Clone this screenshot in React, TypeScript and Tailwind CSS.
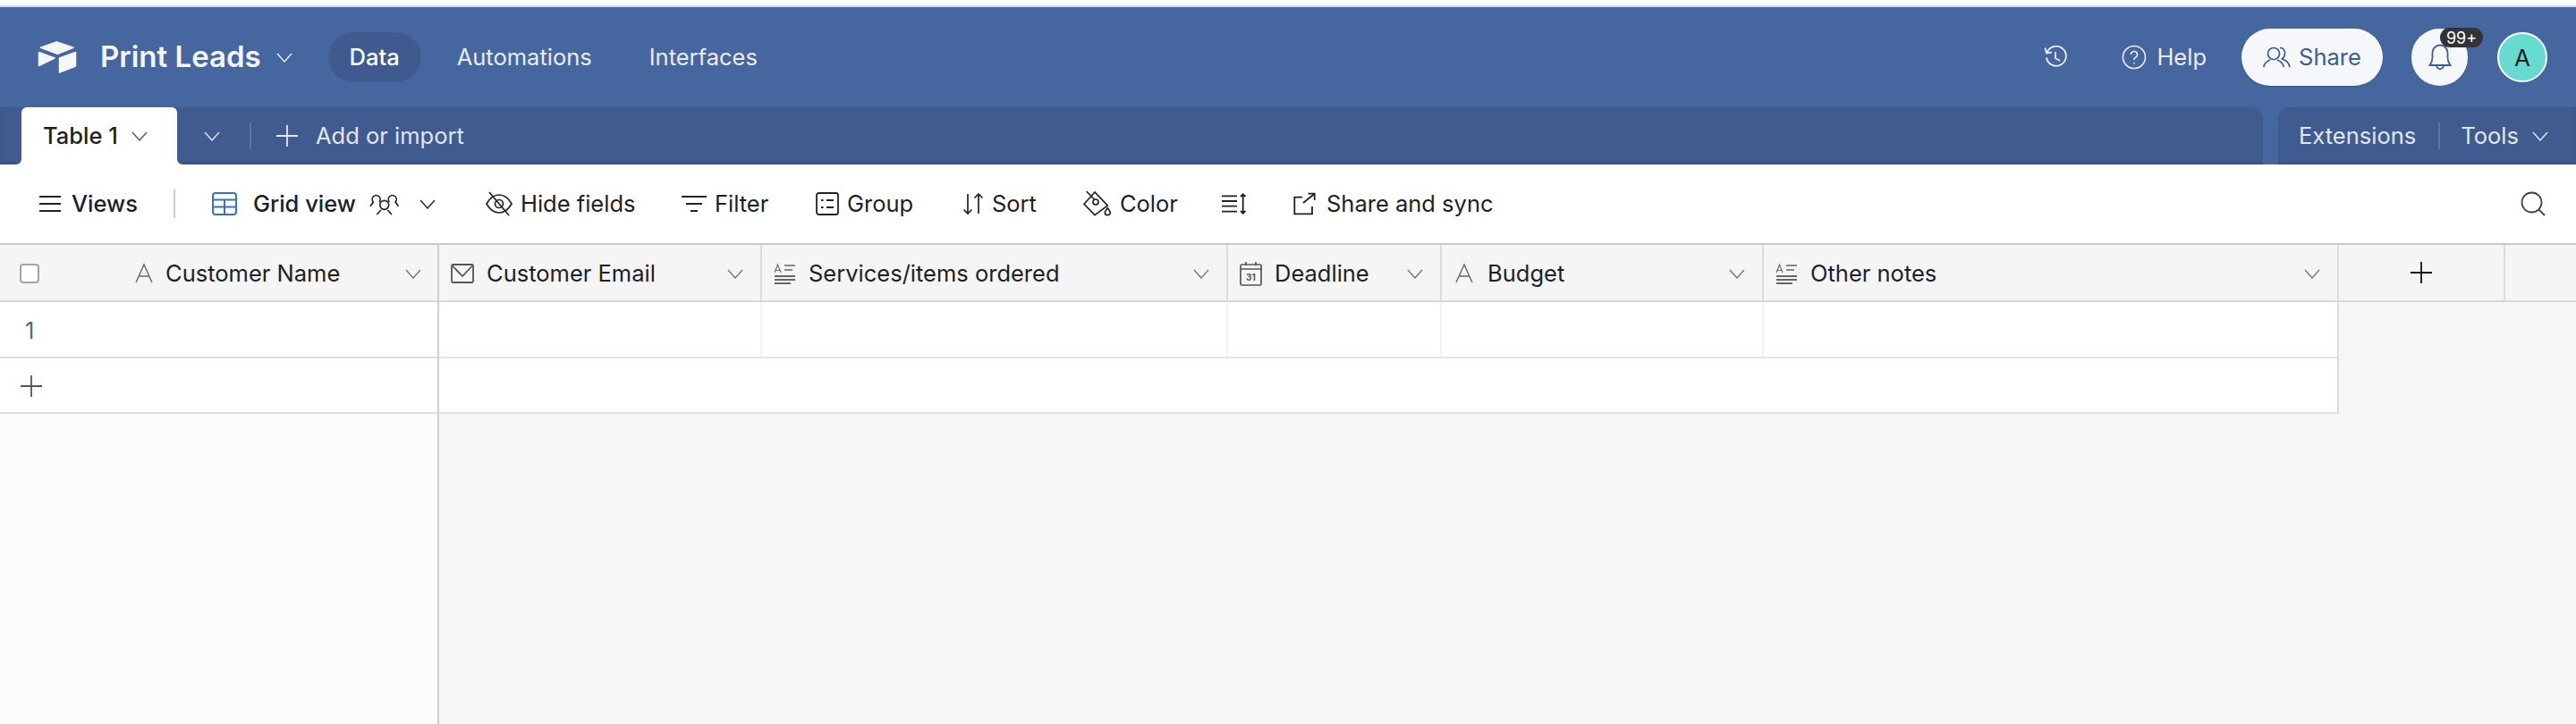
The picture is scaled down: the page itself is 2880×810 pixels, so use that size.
import { ReactNode } from "react";

type IconProps = { className?: string };

const Chevron = ({ className = "" }: IconProps) => (
  <svg viewBox="0 0 18 11" className={`h-[11px] w-[18px] shrink-0 ${className}`} fill="none" stroke="currentColor" strokeWidth="1.4">
    <path d="M1 1l8 9 8-9" />
  </svg>
);

const Plus = ({ className = "" }: IconProps) => (
  <svg viewBox="0 0 26 26" className={`h-[26px] w-[26px] shrink-0 ${className}`} fill="none" stroke="currentColor" strokeWidth="1.8">
    <path d="M13 1v24M1 13h24" />
  </svg>
);

const Logo = () => (
  <svg viewBox="0 0 44 36" className="h-9 w-11 shrink-0" fill="#f5f7fb" stroke="#f5f7fb" strokeWidth="1.5" strokeLinejoin="round">
    <path d="M3.500 7.300L21.300 1l18.700 6.300L22.300 14.300z" />
    <path d="M24.500 19L42.500 12.500v15.500L24.500 35z" />
    <path d="M1.500 12.500L19 19 1.500 27.500z" />
  </svg>
);

const FieldText = () => (
  <svg viewBox="0 0 22 24" className="mx-px h-6 w-[22px] shrink-0" fill="none" stroke="#666" strokeWidth="1.4">
    <path d="M2 22L11 2l9 20M5.5 15h11" />
  </svg>
);

const FieldEmail = () => (
  <svg viewBox="0 0 26 24" className="h-6 w-[26px] shrink-0" fill="none" stroke="#555" strokeWidth="1.8">
    <rect x="1" y="2" width="24" height="20" rx="1.5" />
    <path d="M1.5 3L13 15 24.500 3" />
  </svg>
);

const FieldLong = () => (
  <svg viewBox="0 0 25 24" className="h-6 w-[25px] shrink-0" fill="none" stroke="#666">
    <path d="M1 11l3.500-9 3.500 9M2.200 8.500h4.600" strokeWidth="1.1" />
    <path d="M12 3h12M12 8h9" strokeWidth="1.6" />
    <path d="M1 15h23M1 19h23M1 23h18" strokeWidth="1.8" />
  </svg>
);

const FieldDate = () => (
  <svg viewBox="0 0 25 28" className="h-[28px] w-[25px] shrink-0" fill="none" stroke="#555" strokeWidth="1.700">
    <rect x="1" y="4" width="23" height="23" rx="1.500" />
    <path d="M1 9h23M7 1v4M18 1v4" />
    <text x="12.500" y="22" textAnchor="middle" fontSize="10" fontWeight="700" fill="#555" stroke="none" fontFamily="Inter, sans-serif">31</text>
  </svg>
);

const tools: { label: string; icon: ReactNode; className: string }[] = [
  {
    label: "Hide fields",
    className: "w-[219px]",
    icon: (
      <svg viewBox="0 0 30 32" className="h-8 w-[30px]" fill="none" stroke="#222" strokeWidth="1.700">
        <path d="M1 16C5 9 10 6 15 6s10 3 14 10c-4 7-9 10-14 10S5 23 1 16z" />
        <circle cx="15" cy="16" r="4.500" />
        <path d="M4 3l22 26" />
      </svg>
    ),
  },
  {
    label: "Filter",
    className: "w-[150px]",
    icon: (
      <svg viewBox="0 0 28 20" className="h-5 w-7" fill="none" stroke="#222" strokeWidth="2">
        <path d="M0 2h28M5 10h18M10 18h8" />
      </svg>
    ),
  },
  {
    label: "Group",
    className: "w-[164px]",
    icon: (
      <svg viewBox="0 0 26 26" className="h-[26px] w-[26px]" fill="none" stroke="#222" strokeWidth="1.800">
        <rect x="1" y="1" width="24" height="24" rx="2.500" />
        <path d="M6 9h2.500M12 9h8M6 17h2.500M12 17h8" />
      </svg>
    ),
  },
  {
    label: "Sort",
    className: "w-[135px]",
    icon: (
      <svg viewBox="0 0 24 24" className="h-6 w-6" fill="none" stroke="#222" strokeWidth="1.700">
        <path d="M6 1v22M1.500 18.500L6 23l4.500-4.500M18 23V1M13.500 5.500L18 1l4.500 4.500" />
      </svg>
    ),
  },
  {
    label: "Color",
    className: "w-[154px]",
    icon: (
      <svg viewBox="0 0 32 36" className="h-9 w-8" fill="none" stroke="#222" strokeWidth="1.700">
        <path d="M1 18.300L13 5l14.300 15L13 30.700z" />
        <circle cx="14" cy="16" r="3" />
        <path d="M3.700 4l9 9.500M27.300 22.700c-2 2.500-3 3.700-3 5a3 3 0 006 0c0-1.300-1-2.500-3-5z" />
      </svg>
    ),
  },
];

const columns = [
  { label: "Customer Email", icon: <FieldEmail />, width: "w-[361px]" },
  { label: "Services/items ordered", icon: <FieldLong />, width: "w-[521px]" },
  { label: "Deadline", icon: <FieldDate />, width: "w-[239px]" },
  { label: "Budget", icon: <FieldText />, width: "w-[360px]" },
  { label: "Other notes", icon: <FieldLong />, width: "w-[643px]" },
];

export default function App() {
  return (
    <div className="flex h-[810px] w-[2880px] flex-col overflow-hidden bg-white font-['Inter',sans-serif] text-[25.5px] text-[#1d1f25]">
      <div className="h-[6px] bg-white" />
      <div className="h-[2px] bg-[#d8dbe3]" />

      {/* top app bar */}
      <header className="flex h-[112px] items-center bg-[#46669f] pl-[42px] pr-[32px] text-[#e9edf6]">
        <Logo />
        <span className="ml-[26px] text-[33px] font-semibold text-[#f4f6fb]">Print Leads</span>
        <Chevron className="ml-[17px]" />
        <div className="ml-[40px] flex h-[56px] w-[104px] items-center justify-center rounded-full border border-[#42608f] bg-[#3e5a8e] font-medium text-white">
          Data
        </div>
        <span className="ml-[40px]">Automations</span>
        <span className="ml-[64px]">Interfaces</span>

        <svg viewBox="0 0 26 26" className="ml-auto h-[26px] w-[26px]" fill="none" stroke="#e9edf6" strokeWidth="1.800">
          <path d="M3 13.500A11 11 0 103.500 8M1.500 2.500L3 8.500l6-1M13 7v7l5 3" />
        </svg>
        <svg viewBox="0 0 28 28" className="ml-[61px] h-7 w-7" fill="none" stroke="#e9edf6" strokeWidth="1.600">
          <circle cx="14" cy="14" r="12.500" />
          <path d="M10.500 11a3.500 3.500 0 115 3.200c-1 .6-1.500 1.200-1.500 2.800" />
          <path d="M14 20v1.500" />
        </svg>
        <span className="ml-[11px]">Help</span>
        <button className="ml-[39px] flex h-[64px] w-[158px] items-center justify-center gap-[9px] rounded-full bg-[#f5f7fb] text-[#3f5c92] shadow-sm">
          <svg viewBox="0 0 31 24" className="h-6 w-[31px]" fill="none" stroke="#3f5c92" strokeWidth="1.700">
            <circle cx="12" cy="8" r="6.500" />
            <path d="M1 23c0-5 5-7 7-8M23 23c0-5-5-7-7-8M19 1.500c6 0 7.500 8 2.500 12.500 3 1 7.500 3.500 8.500 9" />
          </svg>
          Share
        </button>
        <div className="relative ml-[32px] flex h-[64px] w-[63px] items-center justify-center rounded-full bg-[#f5f7fb]">
          <svg viewBox="0 0 26 36" className="h-9 w-[26px]" fill="none" stroke="#3f5c92" strokeWidth="1.800">
            <path d="M1.500 27c2-3 3-4 3-9v-5a8.500 8.500 0 0117 0v5c0 5 1 6 3 9z" />
            <path d="M9 27a4 4 0 008 0" />
          </svg>
          <span className="absolute -top-px left-[32px] flex h-[22px] w-[48px] items-center justify-center rounded-full bg-[#333] text-[18px] text-white">99+</span>
        </div>
        <div className="ml-[33px] flex h-[56px] w-[56px] items-center justify-center rounded-full border-2 border-white bg-[#68dbd1] text-[26px] text-[#1d1f25]">
          A
        </div>
      </header>

      {/* table tabs */}
      <div className="flex h-[64px] bg-[#46669f]">
        <div className="flex w-[2530px] items-center rounded-tr-[14px] bg-[#3f5b8f] text-[#e2e7f2] shadow-[inset_0_-2px_2px_rgba(0,0,0,0.15)]">
          <div className="relative ml-[24px] flex h-full w-[174px] items-center rounded-t-[6px] bg-white pl-[24px] text-[#1d1f25]">
            <span className="font-medium">Table 1</span>
            <Chevron className="ml-[15px] text-[#555]" />
            <span className="absolute bottom-0 -left-[6px] h-[6px] w-[6px] bg-white">
              <span className="block h-full w-full rounded-br-[6px] bg-[#3f5b8f]" />
            </span>
            <span className="absolute bottom-0 -right-[6px] h-[6px] w-[6px] bg-white">
              <span className="block h-full w-full rounded-bl-[6px] bg-[#3f5b8f]" />
            </span>
          </div>
          <Chevron className="ml-[30px]" />
          <div className="ml-[33px] h-[30px] w-[2px] bg-[#5a76a8]" />
          <Plus className="ml-[27px]" />
          <span className="ml-[19px]">Add or import</span>
        </div>
        <div className="ml-[17px] flex flex-1 items-center rounded-tl-[14px] bg-[#3f5b8f] pl-[23px] text-[#e2e7f2] shadow-[inset_0_-2px_2px_rgba(0,0,0,0.15)]">
          <span>Extensions</span>
          <div className="ml-[25px] h-[30px] w-[2px] bg-[#5a76a8]" />
          <span className="ml-[23px]">Tools</span>
          <Chevron className="ml-[15px]" />
        </div>
      </div>

      {/* view toolbar */}
      <div className="flex h-[88px] items-center pl-[44px] pr-[34px]">
        <svg viewBox="0 0 24 20" className="h-5 w-6" fill="none" stroke="#222" strokeWidth="2">
          <path d="M0 2h24M0 10h24M0 18h24" />
        </svg>
        <span className="ml-[12px] font-medium">Views</span>
        <div className="ml-[40px] h-[32px] w-[2px] bg-[#c9c9c9]" />
        <svg viewBox="0 0 28 26" className="ml-[41px] h-[26px] w-7" fill="none" stroke="#3b6fc4" strokeWidth="2">
          <rect x="1" y="1" width="26" height="24" rx="3" />
          <path d="M1 8.500h26M1 16.500h26M14 8.500V25" />
        </svg>
        <span className="ml-[18px] font-medium">Grid view</span>
        <svg viewBox="0 0 34 30" className="ml-[15px] h-[30px] w-[34px]" fill="none" stroke="#222" strokeWidth="1.700">
          <circle cx="16.700" cy="16.300" r="5" />
          <path d="M8.300 27l4.700-5M25 27l-4.700-5" />
          <path d="M11 13a4.500 4.500 0 10-6.700 0L1 17.700M22.400 13a4.500 4.500 0 116.700 0l3.300 4.700" />
        </svg>
        <Chevron className="ml-[22px] text-[#222]" />
        <div className="ml-[56px] flex items-center">
          {tools.map((t) => (
            <div key={t.label} className={`flex items-center gap-[9px] ${t.className}`}>
              {t.icon}
              <span>{t.label}</span>
            </div>
          ))}
        </div>
        <svg viewBox="0 0 29 26" className="h-[26px] w-[29px]" fill="none" stroke="#222" strokeWidth="1.800">
          <path d="M1 4.300h17M1 10h17M1 15.700h17M1 21.700h17" />
          <path d="M24.700 2.500v21M22 5l2.700-2.700L27.400 5M22 21l2.700 2.700 2.700-2.700" />
        </svg>
        <svg viewBox="0 0 26 28" className="ml-[52px] h-7 w-[26px]" fill="none" stroke="#222" strokeWidth="1.800">
          <path d="M10 6.700H1.300v18.600H21V17" />
          <path d="M11 13L23.700 2.700M16.500 2.700h7.200V10" />
        </svg>
        <span className="ml-[11px]">Share and sync</span>
        <svg viewBox="0 0 28 28" className="ml-auto h-7 w-7" fill="none" stroke="#444" strokeWidth="1.800">
          <circle cx="12.500" cy="12.500" r="11" />
          <path d="M20 20l7 7" />
        </svg>
      </div>

      {/* grid */}
      <div className="flex min-h-0 flex-1 bg-[#f6f6f6]">
        <div className="flex w-[491px] shrink-0 flex-col border-r-2 border-[#cfcfcf] bg-[#fbfbfb]">
          <div className="flex h-[66px] shrink-0 items-center border-y-2 border-t-[#c8c8c8] border-b-[#d8d8d8] bg-[#f5f5f5] pl-[22px] pt-[2px]">
            <div className="h-[22px] w-[22px] rounded-[4px] border-2 border-[#a5a5a5] bg-white" />
            <div className="ml-[105px]"><FieldText /></div>
            <span className="ml-[12px]">Customer Name</span>
            <Chevron className="ml-auto mr-[18px] text-[#777]" />
          </div>
          <div className="flex h-[63px] shrink-0 items-center border-b-2 border-[#e0e0e0] bg-white pl-[28px] pt-[4px] text-[#666]">1</div>
          <div className="flex h-[62px] shrink-0 items-center border-b-2 border-[#e0e0e0] bg-white pl-[22px] pt-[2px] text-[#555]">
            <Plus />
          </div>
        </div>

        <div className="flex min-w-0 flex-1 flex-col">
          <div className="flex h-[66px] shrink-0 border-y-2 border-t-[#c8c8c8] border-b-[#d8d8d8] bg-[#f5f5f5]">
            {columns.map((c) => (
              <div key={c.label} className={`flex shrink-0 items-center border-r-2 border-[#dcdcdc] pl-[13px] pr-[19px] pt-[2px] ${c.width}`}>
                {c.icon}
                <span className="ml-[14px]">{c.label}</span>
                <Chevron className="ml-auto text-[#777]" />
              </div>
            ))}
            <div className="flex w-[186px] shrink-0 items-center justify-center border-r-2 border-[#dcdcdc]">
              <Plus className="text-[#111]" />
            </div>
          </div>
          <div className="flex h-[125px] w-[2124px] shrink-0 flex-col border-r-2 border-[#dcdcdc] bg-white">
            <div className="flex h-[63px] shrink-0 border-b-2 border-[#e4e4e4]">
              {columns.map((c) => (
                <div key={c.label} className={`shrink-0 border-r-2 border-[#f2f2f2] last:border-r-0 ${c.width}`} />
              ))}
            </div>
            <div className="flex-1 border-b-2 border-[#e0e0e0]" />
          </div>
        </div>
      </div>
    </div>
  );
}
